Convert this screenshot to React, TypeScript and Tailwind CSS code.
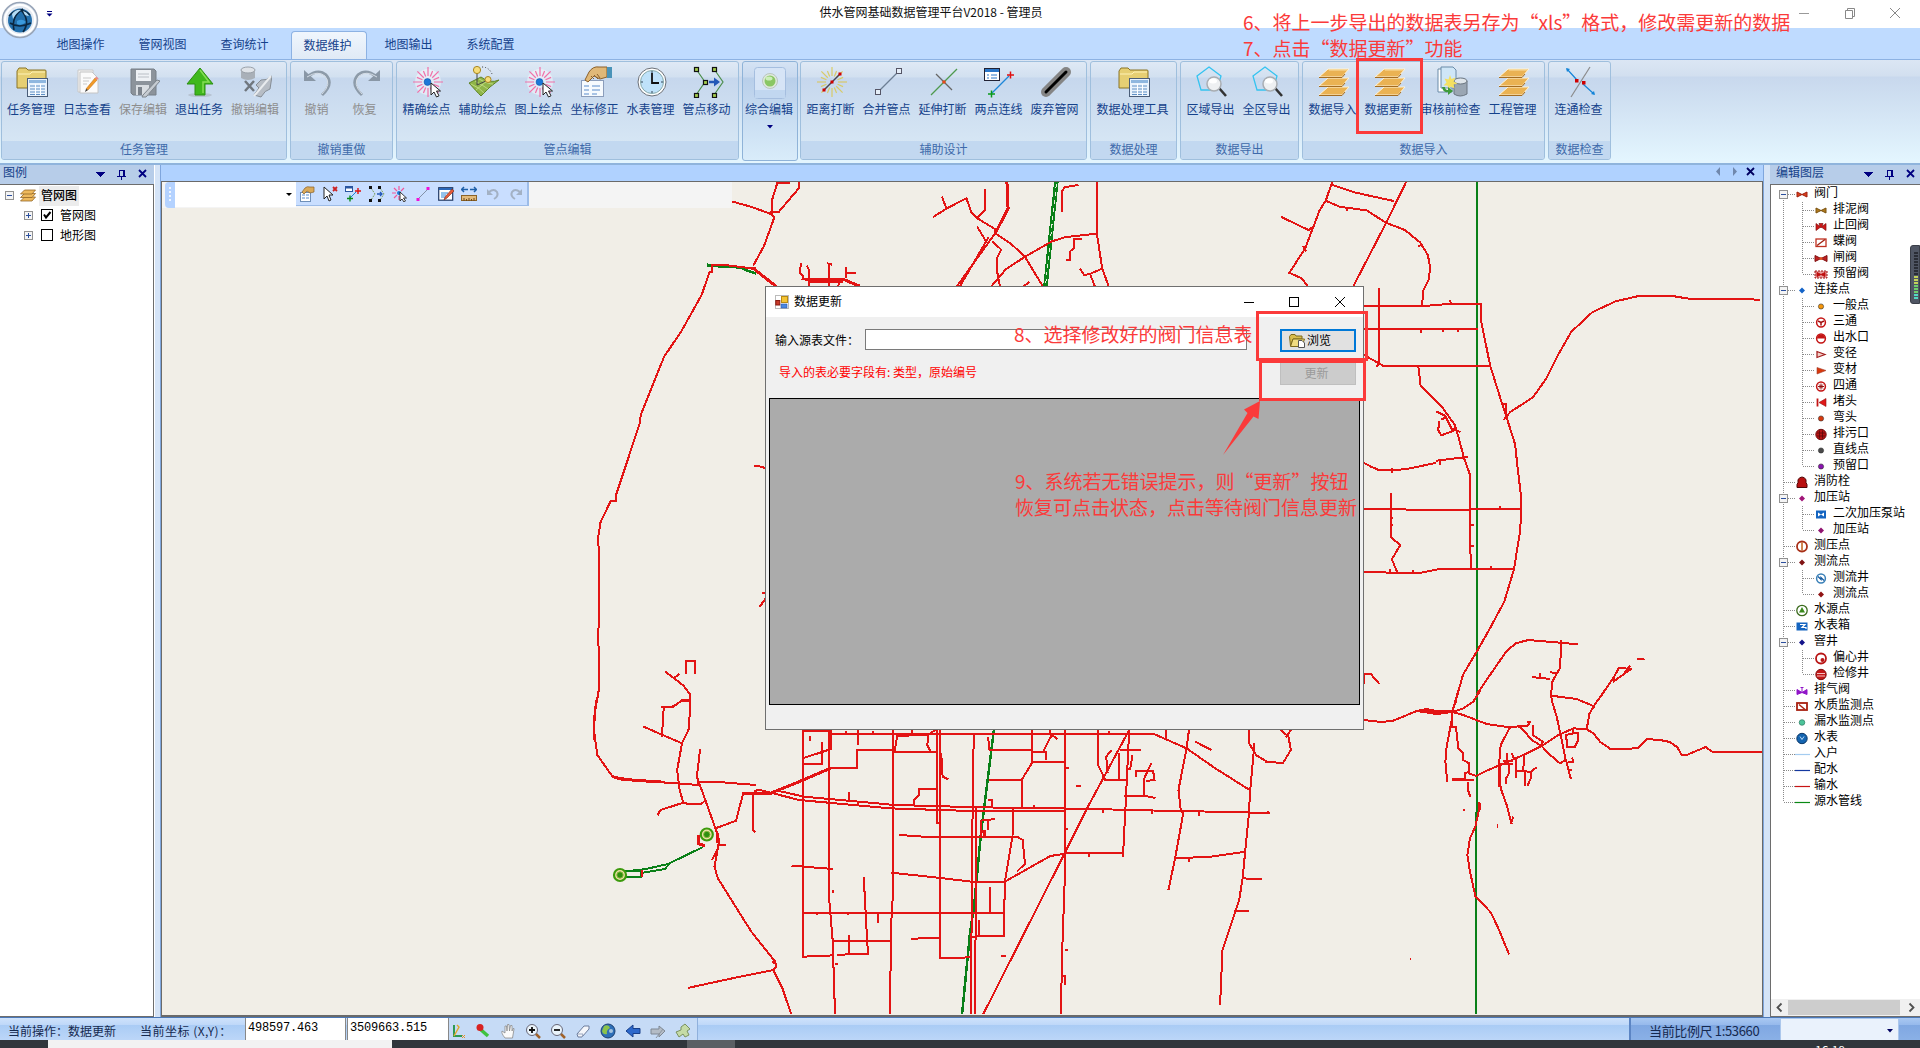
import React from "react";

type P = { children?: React.ReactNode };

const RED = "#e31414";
const GREEN = "#0a8018";

/* ---------- ribbon icons (32 x 32) ---------- */
const Svg32 = ({ children }: P) => (
  <svg width="32" height="32" viewBox="0 0 32 32" fill="none">
    {children}
  </svg>
);

const FolderTable = () => (
  <Svg32>
    <path d="M1 5 L3 2 H10 L12 4 H29 Q30 4 30 5 V22 H1 Z" fill="#e6cf73" stroke="#8a7526" />
    <path d="M2 8 H14 L16 6 H29" stroke="#fff3b8" />
    <rect x="11.5" y="12.5" width="20" height="18" fill="#e9f3fd" stroke="#4a5d78" />
    <rect x="13" y="14" width="17" height="3" fill="#8fb7df" />
    <path d="M14 20H29M14 23H29M14 26H29M14 28.500H29" stroke="#5f8fc4" />
    <path d="M19.500 18V29M24.500 18V29" stroke="#fff" />
  </Svg32>
);

const LogIcon = () => (
  <Svg32>
    <path d="M6 4H21V26H6Z" fill="#f4f4f4" stroke="#c9c9c9" />
    <path d="M8 6H20L26 12V27H8Z" fill="#fbfbfb" stroke="#c4c4c4" />
    <path d="M11 12H19M11 15H17M11 18H15" stroke="#c9c9c9" />
    <path d="M14 23 L23 12 L25 14 L16 24 Z" fill="#f39a26" stroke="#c2741a" strokeWidth=".6" />
    <path d="M14 23L13 26L16 24Z" fill="#333" />
    <path d="M23 12L24 10.500L26.500 12.500L25 14Z" fill="#e88" />
  </Svg32>
);

const SaveGray = () => (
  <Svg32>
    <path d="M3 3H26L28 5V29H5L3 27Z" fill="#8c939b" stroke="#777e87" />
    <rect x="8" y="4" width="15" height="11" fill="#eef1f5" />
    <path d="M10 8H21M10 11H21" stroke="#b9bec5" />
    <rect x="8" y="19" width="13" height="10" fill="#d9dde2" />
    <rect x="10" y="21" width="4" height="8" fill="#7b828b" />
    <path d="M15 29 L29 14 L32 15 L18 31 H14Z" fill="#c6cbd1" stroke="#7d848c" />
  </Svg32>
);

const UpArrow = () => (
  <Svg32>
    <ellipse cx="16" cy="29" rx="12" ry="2" fill="#b7c4d2" />
    <path d="M16 2 L29 18 H21 V29 H11 V18 H3 Z" fill="#3fb81c" stroke="#2c8f12" />
    <path d="M16 4 L25 16 H19 V27" stroke="#86dd55" strokeWidth="1.500" />
  </Svg32>
);

const CancelEdit = () => (
  <Svg32>
    <path d="M1 4V12Q8 16 15 12V4" fill="#a9b0b8" />
    <ellipse cx="8" cy="4" rx="7" ry="3" fill="#dfe3e8" stroke="#9aa1a9" />
    <path d="M5 15L14 25M14 15L5 25" stroke="#70777f" strokeWidth="2.500" />
    <path d="M16 19L21 14Q26 15 32 10L30 23Q25 24 21 31L14 29L19 22Z" fill="#b7bdc5" stroke="#858c94" />
    <path d="M31 10L14 30" stroke="#e8ebee" strokeWidth="2" />
  </Svg32>
);

const UndoBig = ({ flip = false }: { flip?: boolean }) => (
  <Svg32>
    <g transform={flip ? "translate(32 0) scale(-1 1)" : undefined}>
      <path d="M5 11 Q16 2 24 9 Q32 18 20 29" stroke="#8d9ba9" strokeWidth="3" />
      <path d="M2 4V15H14Z" fill="#8997a6" />
      <path d="M5 11 Q16 4 23 10 Q30 18 20 28" stroke="#d6dee7" strokeWidth="1" />
    </g>
  </Svg32>
);

const Burst = ({ color = "#f070a8", dot = true }: { color?: string; dot?: boolean }) => (
  <>
    {Array.from({ length: 16 }, (_, i) => {
      const a = (i * Math.PI) / 8;
      const r = i % 2 ? 12 : 15;
      return (
        <line
          key={i}
          x1={16 + 6 * Math.cos(a)}
          y1={16 + 6 * Math.sin(a)}
          x2={16 + r * Math.cos(a)}
          y2={16 + r * Math.sin(a)}
          stroke={color}
          strokeWidth="1.200"
        />
      );
    })}
    {dot && <circle cx="15.500" cy="16" r="3.400" fill="#1c78d8" stroke="#0c55a8" strokeWidth=".6" />}
  </>
);

const Pointer = ({ x = 19, y = 17 }: { x?: number; y?: number }) => (
  <path d={`M${x} ${y}v12l3-3 2.500 5 2.500-1.200-2.500-4.800h4z`} fill="#fff" stroke="#222" strokeWidth="1" />
);

const PointIcon = () => (
  <Svg32>
    <circle cx="16" cy="16" r="13" fill="#fff" opacity=".45" />
    <Burst />
    <Pointer />
  </Svg32>
);

const AssistIcon = () => (
  <Svg32>
    <path d="M1 17 L13 11 Q22 18 31 14 Q22 20 13 30 Q9 26 1 17Z" fill="#8fb548" stroke="#5f8428" />
    <path d="M3 18Q12 22 16 27M7 15Q16 20 20 23M11 13Q20 18 25 18M8 24L20 14" stroke="#c9e08e" strokeWidth=".8" />
    <path d="M9 5V19M9 19L20 14" stroke="#444" />
    <circle cx="9" cy="4" r="3.600" fill="#f6dd7b" stroke="#a88620" />
    <circle cx="20" cy="13.500" r="3" fill="#f6dd7b" stroke="#a88620" />
    <path d="M14 1Q21 1 24 8" stroke="#333" strokeDasharray="1 2" />
  </Svg32>
);

const HandForm = () => (
  <Svg32>
    <rect x="1.500" y="14.500" width="22" height="16" fill="#f6fafe" stroke="#8b9dbb" />
    <path d="M4 20H9M4 24H9M4 28H9M12 20H20M12 24H20M12 28H17" stroke="#5b8ccc" />
    <path d="M5 14 L9 6 Q13 0 19 1 H27 V11 L20 13 L14 10 L8 16 Z" fill="#e0b878" stroke="#8a5f2a" />
    <path d="M11 10L14 13M14 9L18 13M17 8L20 12" stroke="#8a5f2a" />
    <rect x="27" y="1" width="5" height="11" fill="#4a93b8" />
  </Svg32>
);

const ClockIcon = () => (
  <Svg32>
    <circle cx="16" cy="16" r="14" fill="#fff" stroke="#6b7078" />
    <circle cx="16" cy="16" r="11.500" fill="#bfe2fa" stroke="#8aa" />
    <path d="M16 7V17H23" stroke="#111" strokeWidth="1.800" />
    <path d="M16 5v2M16 25v2M5 16h2M25 16h2" stroke="#345" />
  </Svg32>
);

const MoveIcon = () => (
  <Svg32>
    <path d="M4 3L13 16L4 29M22 3L31 16L22 29" stroke="#4d8f4d" strokeWidth="1.200" />
    <path d="M17 16H26" stroke="#2459b8" strokeWidth="2.500" />
    <path d="M22 11.500L28 16L22 20.500Z" fill="#2459b8" />
    {[
      [2, 1],
      [20, 1],
      [11, 14],
      [2, 27],
      [20, 27],
    ].map(([x, y]) => (
      <rect key={`${x}-${y}`} x={x + 0.5} y={y + 0.5} width="4" height="4" fill="#a6cf4e" stroke="#111" strokeWidth="1.200" />
    ))}
  </Svg32>
);

const GreenDot = () => (
  <Svg32>
    <rect x=".5" y=".5" width="31" height="31" rx="3" fill="#d6e4f6" stroke="#a5bedf" />
    <rect x="1" y="23" width="30" height="8" fill="#c1d7f0" />
    <circle cx="16" cy="14" r="7.500" fill="#dfe9dc" stroke="#b9c6bd" />
    <circle cx="16" cy="14" r="5.500" fill="#8ac764" />
    <ellipse cx="15" cy="11.500" rx="3.500" ry="2" fill="#cdeebb" />
  </Svg32>
);

const BreakDistance = () => (
  <Svg32>
    <g opacity=".9">
      <Burst color="#d9c95a" dot={false} />
    </g>
    <path d="M8 24L24 8" stroke="#445" strokeWidth="1.500" />
    <rect x="22.500" y="6.500" width="3" height="3" fill="#d00000" />
    <rect x="14.500" y="14.500" width="3" height="3" fill="#d00000" />
    <rect x="6.500" y="22.500" width="3" height="3" fill="#d00000" />
  </Svg32>
);

const MergeIcon = () => (
  <Svg32>
    <path d="M7 25L25 7" stroke="#6d7f95" strokeWidth="1.300" />
    <rect x="24.500" y="2.500" width="5" height="5" fill="#e5eef8" stroke="#556" />
    <rect x="3.500" y="23.500" width="5" height="5" fill="#e5eef8" stroke="#556" />
  </Svg32>
);

const ExtendBreak = () => (
  <Svg32>
    <path d="M3 29L29 3" stroke="#4e9a4e" strokeWidth="1.300" />
    <path d="M8 8L24 24" stroke="#666" strokeWidth="1.200" />
    <circle cx="16" cy="16" r="1.800" fill="#e44a1a" />
  </Svg32>
);

const TwoPoint = () => (
  <Svg32>
    <rect x=".5" y="2.500" width="15" height="12" fill="#fff" stroke="#223" />
    <rect x="1" y="3" width="14" height="3" fill="#2a76c8" />
    <path d="M3 9h2M3 12h2M7 9h6M7 12h6" stroke="#2a76c8" />
    <path d="M8 27L25 10" stroke="#1d86d8" strokeWidth="1.300" />
    <path d="M4 28H11M7.500 24.500V31.500" stroke="#0a9a1a" strokeWidth="1.500" />
    <path d="M23 9H30M26.500 5.500V12.500" stroke="#e01010" strokeWidth="1.500" />
  </Svg32>
);

const Abandon = () => (
  <Svg32>
    <path d="M6 26L26 6" stroke="#858585" strokeWidth="10" strokeLinecap="round" />
    <path d="M6 26L26 6" stroke="#000" strokeWidth="3" strokeLinecap="round" />
  </Svg32>
);

const AreaExport = () => (
  <Svg32>
    <path d="M13 1L25 10L21 24H5L1 10Z" stroke="#35c3f0" strokeWidth="1.300" />
    <path d="M23 22L30 30" stroke="#333" strokeWidth="2.500" />
    <circle cx="18" cy="18" r="7" fill="#eef0f2" stroke="#a9adb2" strokeWidth="1.500" />
    <ellipse cx="17" cy="15" rx="4" ry="2.500" fill="#fff" />
  </Svg32>
);

const Layers = () => (
  <Svg32>
    {[20, 11, 2].map((y) => (
      <path key={y} d={`M10 ${y + 1}H31L24 ${y + 9}H1Z`} fill="#eab253" stroke="#fdf3dc" strokeWidth="1" />
    ))}
    {[29, 20, 11].map((y) => (
      <path key={y} d={`M1 ${y}.500H24L27 ${y - 3}`} stroke="#a36c22" strokeWidth="1" />
    ))}
    <path d="M11 4H29" stroke="#fbe0a3" />
  </Svg32>
);

const AuditIcon = () => (
  <Svg32>
    <path d="M2 3H13L16 6V26H2Z" fill="#fff" stroke="#6b8ba8" />
    <path d="M5 1H17L20 4V22H5Z" fill="#cfe6f7" stroke="#6b8ba8" />
    <path d="M18 15V28Q24 32 31 28V15" fill="#9aa6b3" stroke="#6a7580" />
    <ellipse cx="24.500" cy="15" rx="6.500" ry="3" fill="#dfe5ea" stroke="#6a7580" />
    <path d="M14 9l1.500 4 4-1.500-2 4 4 2-4 1 1 4-4-2-2 3-1-4-4 0 3-3-2-4 4 1z" fill="#f4e061" />
    <path d="M6 21Q7 27 12 26V29L17 25L12 21V24Q9 24 9 21Z" fill="#3f9b3a" />
  </Svg32>
);

const ConnCheck = () => (
  <Svg32>
    <path d="M26 1L7 31" stroke="#8b8b8b" strokeWidth="1.200" />
    <path d="M3 3L13 14M19 18L30 28" stroke="#1585d8" strokeWidth="1.200" />
    <path d="M2 2l4 1-3 3zM31 29l-4-1 3-3z" fill="#1585d8" />
    <rect x="11" y="13" width="3.500" height="3.500" fill="#d00000" />
    <rect x="18" y="15" width="3.500" height="3.500" fill="#d00000" />
  </Svg32>
);

/* ---------- ribbon ---------- */
type Item = { label: string; icon: React.ReactNode; w?: string; off?: boolean };

const RibbonGroup = ({ title, items, className }: { title: string; items: Item[]; className: string }) => (
  <div
    className={`flex h-[99px] shrink-0 flex-col overflow-hidden rounded-[3px] border border-[#9fbfdd] bg-[linear-gradient(180deg,#dfe9f5_0px,#d2e0f0_15px,#c6d7ed_16px,#d6e6f4_81px)] ${className}`}
  >
    <div className="flex h-[80px] justify-center pt-[4px]">
      {items.map((it) => (
        <div key={it.label} className={`flex shrink-0 flex-col items-center ${it.w ?? "w-[56px]"}`}>
          {it.icon}
          <span
            className={`mt-[2px] pr-[2px] text-[12px] leading-[18px] whitespace-nowrap ${it.off ? "text-[#8d8d8d]" : "text-[#15428b]"}`}
          >
            {it.label}
          </span>
        </div>
      ))}
    </div>
    <div className="h-[18px] bg-[#c2d8f0] text-center text-[12px] leading-[16px] text-[#3e6aaa]">{title}</div>
  </div>
);

const Ribbon = () => (
  <div className="flex h-[104px] shrink-0 border-t border-[#8db2e3] bg-[linear-gradient(180deg,#dbe6f4_0px,#d2dfef_16px,#c8d8ed_17px,#e3f5fe_100px)] pt-px">
    <RibbonGroup
      className="ml-px w-[286px]"
      title="任务管理"
      items={[
        { label: "任务管理", icon: <FolderTable /> },
        { label: "日志查看", icon: <LogIcon /> },
        { label: "保存编辑", icon: <SaveGray />, off: true },
        { label: "退出任务", icon: <UpArrow /> },
        { label: "撤销编辑", icon: <CancelEdit />, off: true },
      ]}
    />
    <RibbonGroup
      className="ml-[3px] w-[103px]"
      title="撤销重做"
      items={[
        { label: "撤销", icon: <UndoBig />, off: true, w: "w-[48px]" },
        { label: "恢复", icon: <UndoBig flip />, off: true, w: "w-[48px]" },
      ]}
    />
    <RibbonGroup
      className="ml-[3px] w-[343px]"
      title="管点编辑"
      items={[
        { label: "精确绘点", icon: <PointIcon /> },
        { label: "辅助绘点", icon: <AssistIcon /> },
        { label: "图上绘点", icon: <PointIcon /> },
        { label: "坐标修正", icon: <HandForm /> },
        { label: "水表管理", icon: <ClockIcon /> },
        { label: "管点移动", icon: <MoveIcon /> },
      ]}
    />
    <div className="ml-[3px] flex h-[100px] w-[56px] shrink-0 flex-col items-center rounded-[3px] border border-[#8fb3d8] bg-[linear-gradient(180deg,#d5e3f4_0px,#c8d9ef_15px,#b9cfea_16px,#d9ecfa_98px)] pt-[5px]">
      <GreenDot />
      <span className="mt-px pr-[2px] text-[12px] leading-[18px] whitespace-nowrap text-[#15428b]">综合编辑</span>
      <svg className="mt-[7px]" width="6" height="4" viewBox="0 0 6 4">
        <path d="M0 0H6L3 3.500Z" fill="#000080" />
      </svg>
    </div>
    <RibbonGroup
      className="ml-[2px] w-[287px]"
      title="辅助设计"
      items={[
        { label: "距离打断", icon: <BreakDistance /> },
        { label: "合并管点", icon: <MergeIcon /> },
        { label: "延伸打断", icon: <ExtendBreak /> },
        { label: "两点连线", icon: <TwoPoint /> },
        { label: "废弃管网", icon: <Abandon /> },
      ]}
    />
    <RibbonGroup
      className="ml-[3px] w-[87px]"
      title="数据处理"
      items={[{ label: "数据处理工具", icon: <FolderTable />, w: "w-[80px]" }]}
    />
    <RibbonGroup
      className="ml-[3px] w-[119px]"
      title="数据导出"
      items={[
        { label: "区域导出", icon: <AreaExport /> },
        { label: "全区导出", icon: <AreaExport /> },
      ]}
    />
    <RibbonGroup
      className="ml-[3px] w-[243px]"
      title="数据导入"
      items={[
        { label: "数据导入", icon: <Layers /> },
        { label: "数据更新", icon: <Layers /> },
        { label: "审核前检查", icon: <AuditIcon />, w: "w-[68px]" },
        { label: "工程管理", icon: <Layers /> },
      ]}
    />
    <RibbonGroup
      className="ml-[3px] w-[63px]"
      title="数据检查"
      items={[{ label: "连通检查", icon: <ConnCheck /> }]}
    />
  </div>
);

/* ---------- small 16 px icons ---------- */
const Svg16 = ({ children }: P) => (
  <svg width="16" height="16" viewBox="0 0 16 16" fill="none" className="shrink-0">
    {children}
  </svg>
);

const Undo16 = ({ flip = false }: { flip?: boolean }) => (
  <Svg16>
    <g transform={flip ? "translate(16 0) scale(-1 1)" : undefined}>
      <path d="M4 6Q9 2 12 6Q14 10 9 13" stroke="#a3b1c4" strokeWidth="2" />
      <path d="M2 3V9H8Z" fill="#a3b1c4" />
    </g>
  </Svg16>
);

const mapTools: React.ReactNode[] = [
  <Svg16 key="prop">
    <rect x="1.500" y="6.500" width="10" height="9" fill="#fff" stroke="#6f8fb8" />
    <path d="M3 9h3M3 12h3M7 9h3M7 12h3" stroke="#5b8ccc" />
    <path d="M3 6L6 2Q8 0 11 1H15V6L11 7L8 5L5 8Z" fill="#d9a95a" stroke="#8a6025" strokeWidth=".7" />
  </Svg16>,
  <Svg16 key="sel">
    <path d="M2 1v12l3-3 2 5 2-1-2-5h4z" fill="#fff" stroke="#222" />
    <path d="M11 1L15 5M15 1L11 5" stroke="#c22" strokeWidth="1.800" />
  </Svg16>,
  <Svg16 key="add">
    <rect x=".5" y=".5" width="7" height="5" fill="#fff" stroke="#2a56a0" />
    <path d="M1 1.500H7" stroke="#2a56a0" strokeWidth="2" />
    <path d="M5 12L11 6" stroke="#1d86d8" />
    <path d="M2 12.500H8M5 9.500V15.500" stroke="#0a8a1a" strokeWidth="1.400" />
    <path d="M10 5H16M13 2V8" stroke="#e01010" strokeWidth="1.400" />
  </Svg16>,
  <Svg16 key="mv">
    <path d="M2 2L6 8L2 14M11 2L15 8L11 14" stroke="#7ba05a" strokeDasharray="2 1" />
    <path d="M8 8H13M11 6L13 8L11 10" stroke="#2459b8" strokeWidth="1.300" />
    <path d="M0 0h3v3H0zM9 0h3v3h-3zM0 13h3v3H0zM9 13h3v3h-3z" fill="#111" />
  </Svg16>,
  <Svg16 key="pt">
    <path d="M7 0V4M0 7H4M2 2L5 5M12 2L9 5M2 12L5 9M7 10V14" stroke="#f0569a" strokeWidth="1.200" />
    <circle cx="7" cy="7" r="2" fill="#1c78d8" />
    <path d="M8 6v9l2-2 2 3 1.500-1-2-3h3z" fill="#fff" stroke="#222" strokeWidth=".9" />
  </Svg16>,
  <Svg16 key="ln">
    <path d="M3 13L13 3" stroke="#8391a8" />
    <path d="M1.500 12h3v3h-3zM11.500 1h3v3h-3z" fill="#f010d8" />
  </Svg16>,
  <Svg16 key="ed">
    <rect x=".7" y="1.700" width="14" height="12.500" fill="#fff" stroke="#223a66" strokeWidth="1.200" />
    <path d="M1 3H14" stroke="#2a66b8" strokeWidth="2" />
    <path d="M3 7h7M3 9h5M3 11h4" stroke="#2a86d8" />
    <path d="M14 3L7 11L6 14L9 12L16 5Z" fill="#e55a3a" stroke="#7a2a18" strokeWidth=".6" />
  </Svg16>,
  <Svg16 key="rl">
    <path d="M1 3.500H7M9 3.500H15M3 1L.5 3.500L3 6M13 1L15.500 3.500L13 6" stroke="#1f5fa8" strokeWidth="1.500" />
    <rect x=".5" y="9.500" width="15" height="5" fill="#e2b97a" stroke="#8a6228" />
    <path d="M3 12v3M5.500 13v2M8 12v3M10.500 13v2M13 12v3" stroke="#6d4818" />
  </Svg16>,
  <Undo16 key="u" />,
  <Undo16 key="r" flip />,
];

const statusTools: React.ReactNode[] = [
  <Svg16 key="a">
    <path d="M4 2V13H12" stroke="#2f9a56" strokeWidth="2" />
    <path d="M4 13L9 4L7 2" stroke="#e0a92a" strokeWidth="1.400" />
    <path d="M12 12l3 3M15 12l-3 3" stroke="#e0922a" />
  </Svg16>,
  <Svg16 key="b">
    <path d="M5 6L13 13" stroke="#3fc23f" strokeWidth="3.500" />
    <circle cx="5" cy="4.500" r="3.500" fill="#d82222" />
  </Svg16>,
  <Svg16 key="c">
    <path d="M5 15Q1 10 2 8L5 10V3L6.500 3L7 8L7.500 1.500H9L9.500 8L10.500 2.500H12L12 8L13.500 5L14 6L12.500 15Z" fill="#fafafa" stroke="#8a8a8a" strokeWidth=".8" />
  </Svg16>,
  <Svg16 key="d">
    <path d="M10 10L15 15" stroke="#a0622a" strokeWidth="2.500" />
    <circle cx="7" cy="7" r="5.500" fill="#eaf4fb" stroke="#667" />
    <path d="M4 7H10M7 4V10" stroke="#111" strokeWidth="1.800" />
  </Svg16>,
  <Svg16 key="e">
    <path d="M10 10L15 15" stroke="#a0622a" strokeWidth="2.500" />
    <circle cx="7" cy="7" r="5.500" fill="#eaf4fb" stroke="#667" />
    <path d="M4 7H10" stroke="#111" strokeWidth="1.800" />
  </Svg16>,
  <Svg16 key="f">
    <path d="M2 11L9 3H14L14 6L7 14H3Z" fill="#f4f6fa" stroke="#6c7c9c" />
    <path d="M7 14L8 11H3" stroke="#9aa6bf" />
  </Svg16>,
  <Svg16 key="g">
    <circle cx="8" cy="8" r="7" fill="#2e6fb8" stroke="#1b3f70" />
    <path d="M4 3Q9 1 10 5Q6 7 7 11Q3 12 2 8Z" fill="#8bc34a" />
    <circle cx="11" cy="8" r="2" fill="#d8e8f0" opacity=".7" />
  </Svg16>,
  <Svg16 key="h">
    <path d="M1 8L8 2V5.500H15V10.500H8V14Z" fill="#2c68cc" stroke="#173f8a" />
  </Svg16>,
  <Svg16 key="i">
    <path d="M15 8L9 3V6H1V11H9V14Z" fill="#b4bcc6" stroke="#7e8894" />
    <path d="M6 15L13 6" stroke="#8b949e" />
  </Svg16>,
  <Svg16 key="j">
    <path d="M6 4L10 1L15 6L12 8L14 12L10 14L8 11L4 14L1 9L6 7Z" fill="#c5dba6" stroke="#7a9160" />
  </Svg16>,
];

/* ---------- dock panel header ---------- */
const PanelHead = ({ title, className }: { title: string; className?: string }) => (
  <div className={`flex h-[19px] shrink-0 items-center bg-[#b7cde9] text-[12px] text-[#15428b] ${className ?? ""}`}>
    <span className="grow pb-[5px] leading-[14px]">{title}</span>
    <svg width="60" height="14" viewBox="0 0 60 14" fill="none" shapeRendering="crispEdges" className="-mt-[2px]">
      <path d="M3 5H12L7.500 10Z" fill="#000080" />
      <path d="M26 3V9M30 3V9M31 3V9M26 3H31M24 9.500H33M28.500 9V13" stroke="#000080" />
      <path d="M46 3L53 10M53 3L46 10" stroke="#000080" strokeWidth="1.800" shapeRendering="auto" />
    </svg>
  </div>
);

/* ---------- left legend ---------- */
const Expander = ({ plus = false }: { plus?: boolean }) => (
  <svg width="9" height="9" viewBox="0 0 9 9" shapeRendering="crispEdges" className="shrink-0">
    <rect x=".5" y=".5" width="8" height="8" fill="#f4f4f4" stroke="#919191" />
    <path d={plus ? "M2 4.500H7M4.500 2V7" : "M2 4.500H7"} stroke="#2b4f9e" />
  </svg>
);

const Check = ({ on = false }: { on?: boolean }) => (
  <svg width="12" height="12" viewBox="0 0 12 12" className="shrink-0">
    <rect x=".5" y=".5" width="11" height="11" fill="#fff" stroke="#000" />
    {on && <path d="M3 5.500L5 8.500L9.500 3" stroke="#000" strokeWidth="2" fill="none" />}
  </svg>
);

const LeftPanel = () => (
  <div className="flex w-[154px] shrink-0 flex-col">
    <PanelHead title="图例" className="pr-px pl-[3px]" />
    <div className="flex grow flex-col border-t border-r border-b border-[#6d6d6d] bg-white text-[12px] text-black">
      <div className="flex h-[21px] items-center pl-[5px]">
        <Expander />
        <svg className="ml-[6px] shrink-0" width="16" height="13" viewBox="0 0 32 26">
          {[16, 9, 2].map((y) => (
            <path key={y} d={`M9 ${y}H31L24 ${y + 8}H1Z`} fill="#eeb95c" stroke="#8f6222" strokeWidth="1.500" />
          ))}
        </svg>
        <span className="ml-[3px] bg-[#ececec] px-[2px] pb-[3px] leading-[17px] font-medium">管网图</span>
      </div>
      <div className="-mt-px flex h-5 items-center pl-6">
        <Expander plus />
        <span className="ml-2 flex">
          <Check on />
        </span>
        <span className="ml-[7px] pb-px leading-[19px]">管网图</span>
      </div>
      <div className="flex h-5 items-center pl-6">
        <Expander plus />
        <span className="ml-2 flex">
          <Check />
        </span>
        <span className="ml-[7px] pb-px leading-[19px]">地形图</span>
      </div>
    </div>
  </div>
);

/* ---------- right layer tree ---------- */
const bow = (c: string, s: string) => <path d="M-5 -2.500L0 0L5 -2.500V2.500L0 0L-5 2.500Z" fill={c} stroke={s} strokeWidth="1" />;
const dot = (c: string, r = 2.600) => <circle r={r} fill={c} stroke="#333" strokeWidth=".6" />;
const dia = (c: string) => <path d="M-3 0L0 -3L3 0L0 3Z" fill={c} />;
const ring = (inner: React.ReactNode, c = "#c41414") => (
  <>
    <circle r="4.400" fill="#fff" stroke={c} strokeWidth="1.500" />
    {inner}
  </>
);
const line = (c: string) => <path d="M-7 0H8" stroke={c} strokeWidth="1.200" />;

type Row = { t: string; i: React.ReactNode; d?: 1; open?: 1; last?: 1 };

const rows: Row[] = [
  { t: "阀门", i: bow("#d8401c", "#a02010"), open: 1 },
  { t: "排泥阀", i: bow("#b07a1c", "#7a5210"), d: 1 },
  { t: "止回阀", i: <path d="M-5 -3L-1 0L-2 -3H2L1 0L5 -3V4L1 1H-1L-5 4Z" fill="#d01818" stroke="#801010" strokeWidth=".7" />, d: 1 },
  { t: "蝶阀", i: <><rect x="-5" y="-3.500" width="10" height="7.500" fill="#fff" stroke="#c03020" strokeWidth="1.300" /><path d="M-4 3L4 -3" stroke="#a02010" strokeWidth="1.300" /></>, d: 1 },
  { t: "闸阀", i: <><path d="M-6 -3L0 0L6 -3V3L0 0L-6 3Z" fill="#c02020" stroke="#801010" /><circle r="1.500" fill="#e05020" /></>, d: 1 },
  { t: "预留阀", i: <><rect x="-6" y="-3.500" width="12" height="7" fill="#e8a0a0" stroke="#a01010" strokeDasharray="2 1" /><path d="M-4 -2L0 0L4 -2V2L0 0L-4 2Z" fill="#c01010" stroke="#c01010" /></>, d: 1, last: 1 },
  { t: "连接点", i: dia("#1464c8"), open: 1 },
  { t: "一般点", i: dot("#f5960a"), d: 1 },
  { t: "三通", i: ring(<path d="M-3 -1.500L0 0L3 -1.500M0 0V3" stroke="#a01010" strokeWidth="1.500" />), d: 1 },
  { t: "出水口", i: ring(<path d="M-4 0A4 4 0 0 1 4 0Z" fill="#c41414" />), d: 1 },
  { t: "变径", i: <path d="M-4 -3V3L4 0Z" fill="#f4d0c8" stroke="#a01818" strokeWidth="1.200" />, d: 1 },
  { t: "变材", i: <path d="M-4 -3V3.500L5 0Z" fill="#d8380c" stroke="#a04030" strokeWidth=".6" />, d: 1 },
  { t: "四通", i: ring(<path d="M-3 0H3M0 -3V3M-2 -2L2 2M2 -2L-2 2" stroke="#901010" />), d: 1 },
  { t: "堵头", i: <><path d="M-3.500 -4V4" stroke="#c41414" strokeWidth="1.800" /><path d="M-2 0L5 -4V4Z" fill="#e01818" stroke="#901010" strokeWidth=".6" /></>, d: 1 },
  { t: "弯头", i: dot("#d8380c"), d: 1 },
  { t: "排污口", i: <><circle r="5.200" fill="#b81414" stroke="#701010" /><path d="M-4 -1.500H4M-4 1.500H4M-1.500 -4V4M1.500 -4V4" stroke="#5c0808" strokeWidth=".8" /></>, d: 1 },
  { t: "直线点", i: dot("#4a4a4a"), d: 1 },
  { t: "预留口", i: dot("#8a14b0"), d: 1, last: 1 },
  { t: "消防栓", i: <path d="M-5 5V2L-4 0V-3Q0 -8 4 -3V0L5 2V5Z" fill="#b81010" stroke="#500606" /> },
  { t: "加压站", i: dia("#a01478"), open: 1 },
  { t: "二次加压泵站", i: <><rect x="-5" y="-4" width="10" height="8" fill="#1464c0" /><path d="M-3 -2L0 0L3 -2V2L0 0L-3 2Z" fill="#fff" /></>, d: 1 },
  { t: "加压站", i: dia("#901470"), d: 1, last: 1 },
  { t: "测压点", i: <><circle r="5" fill="#fff" stroke="#a83018" strokeWidth="1.800" /><path d="M0 -4V4" stroke="#c06018" strokeWidth="1.500" /></> },
  { t: "测流点", i: dia("#801414"), open: 1 },
  { t: "测流井", i: ring(<path d="M-3 -2L0 1L0 -1L3 2" stroke="#145aa0" strokeWidth="1.300" />, "#3a80b8"), d: 1 },
  { t: "测流点", i: dia("#901414"), d: 1, last: 1 },
  { t: "水源点", i: <><circle r="5.200" fill="#fff" stroke="#3a6a1c" strokeWidth="1.300" /><path d="M0 -3.500L3 2H-3Z" fill="#3a8a1c" /></> },
  { t: "水表箱", i: <><rect x="-5.500" y="-4" width="11" height="8" fill="#1464c0" /><path d="M-2 -2H3L0 1H4V2.500" stroke="#fff" strokeWidth="1.200" fill="none" /></> },
  { t: "窨井", i: dia("#14148a"), open: 1 },
  { t: "偏心井", i: <><circle r="5" fill="#fff" stroke="#b81414" strokeWidth="1.800" /><circle cx="1.500" cy="1.500" r="2" fill="#b81414" /></>, d: 1 },
  { t: "检修井", i: <><circle r="5.200" fill="#c41818" stroke="#801010" /><path d="M-4 -1H4M-4 1.500H4" stroke="#f4c0c0" /></>, d: 1, last: 1 },
  { t: "排气阀", i: <path d="M-5 -1L0 2L5 -1V4L0 2L-5 4ZM0 2V-3M-1.500 -3H1.500" fill="#9014c8" stroke="#9014c8" /> },
  { t: "水质监测点", i: <><rect x="-5" y="-3.500" width="10" height="7" fill="#fff" stroke="#a82010" strokeWidth="1.800" /><path d="M-3 -2L3 3" stroke="#a82010" strokeWidth="1.500" /></> },
  { t: "漏水监测点", i: <circle r="2.800" fill="#4cc49a" stroke="#2a7a60" strokeWidth=".7" /> },
  { t: "水表", i: <><circle r="5.200" fill="#1464b0" stroke="#0c3868" /><path d="M-2 -2L0 1L2 -2" stroke="#bcdcf8" /></> },
  { t: "入户", i: line("#a4ccf0") },
  { t: "配水", i: line("#1438a0") },
  { t: "输水", i: line("#c81414") },
  { t: "源水管线", i: line("#0a8a14") },
];

const TreeRow = ({ r, first, end }: { r: Row; first: boolean; end: boolean }) => (
  <div className="flex h-4 items-center">
    <svg width={r.d ? 62 : 43} height="16" viewBox={`0 0 ${r.d ? 62 : 43} 16`} fill="none" className="shrink-0">
      <g stroke="#8a8a8a" strokeDasharray="1 1" shapeRendering="crispEdges">
        <path d={first ? "M12.500 8V16" : end ? "M12.500 0V8" : "M12.500 0V16"} />
        {!r.d && <path d="M13 8.500H24" />}
        {r.d && <path d={r.last ? "M31.500 0V8" : "M31.500 0V16"} />}
        {r.d && <path d="M32 8.500H43" />}
      </g>
      {r.open && (
        <g shapeRendering="crispEdges">
          <rect x="8.500" y="4.500" width="8" height="8" fill="#f4f4f4" stroke="#919191" />
          <path d="M10 8.500H15" stroke="#2b4f9e" />
        </g>
      )}
      <g transform={`translate(${r.d ? 50 : 31} 8.500)`}>{r.i}</g>
    </svg>
    <span className="-mt-[5px] text-[12px] leading-4 whitespace-nowrap text-black">{r.t}</span>
  </div>
);

const RightPanel = () => (
  <div className="flex w-[150px] shrink-0 flex-col">
    <PanelHead title="编辑图层" className="-mr-px pl-[6px]" />
    <div className="flex grow flex-col border-t border-b border-l border-[#6d6d6d] bg-white">
      <div className="flex grow flex-col pt-px">
        {rows.map((r, i) => (
          <TreeRow key={i} r={r} first={i === 0} end={i === rows.length - 1} />
        ))}
      </div>
      <div className="flex h-[17px] items-center bg-[#f0f0f0]">
        <svg width="17" height="17" viewBox="0 0 17 17" fill="none">
          <path d="M10.500 4.500L6.500 8.500L10.500 12.500" stroke="#505050" strokeWidth="1.800" />
        </svg>
        <div className="h-[15px] w-[112px] bg-[#cdcdcd]" />
        <svg className="ml-[3px]" width="17" height="17" viewBox="0 0 17 17" fill="none">
          <path d="M6.500 4.500L10.500 8.500L6.500 12.500" stroke="#505050" strokeWidth="1.800" />
        </svg>
      </div>
    </div>
  </div>
);

/* ---------- pipe network, drawn in four map sheets ---------- */
type Sheet = { tf: string; red: string; bold?: string };

const sheets: Sheet[] = [
  {
    tf: "translate(560 180) scale(.382653 .357143)",
    red: "M449 60L500 75L553 96L553 60L568 8H600M625 6V22L572 89L548 90M553 96L560 105L533 185L505 240M505 248L430 238H397V258H391L370 322L318 422L272 495L211 658L209 680L147 880V898L132 900L106 958L99 1005L101 1030V1250L99 1280L101 1310V1430L90 1500V1568M630 233L626 260L636 268L634 276H650M645 240L650 250V298M702 233V298M698 233L711 237M747 243V275M747 260H773M730 285L727 298M650 285H740M508 800L520 801L537 807M527 1157H537M522 1195L537 1172M975 104L1010 80L1062 51L1075 90L1090 107L1110 85V25M998 46L1010 80M1090 107L1138 138V150L1180 180L1215 215L1262 298M1120 160L1045 298M1138 148L1037 298M1090 130L1115 175M1130 172L1153 195L1141 220L1143 260L1150 298M1127 298L1165 250L1215 215L1285 172L1320 160L1405 150M1403 6V150L1417 248L1434 298M1355 14L1320 20L1312 30V90M1365 164H1343V190L1333 200V225H1322M1358 248L1370 266L1385 263L1417 248M1385 263L1398 298M1212 298L1226 285M275 1377L298 1395L312 1382M298 1395L322 1415L340 1440L339 1456M329 1382V1346H352V1382M340 1456H320L296 1475H265",
    bold: "M508 250L565 298M640 278H740L783 297M1168 6L1171 80L1138 148M500 248H512",
  },
  {
    tf: "translate(1160 180) scale(.382653 .357143)",
    red: "M450 6L433 58L417 85L380 190L338 260L370 275L386 298M374 185L382 200M445 12L510 35L560 47L612 59M643 6L591 120L505 298M433 58L470 75L540 85L591 120L640 140L680 175L700 210L706 245L702 280L688 310L685 350M488 78V88M675 186L685 180M316 103L388 140L402 130M533 352H700L765 346H838L840 400L863 520L895 630L905 662L928 740L934 800L944 890V940L940 990L925 1090L900 1180L860 1260L828 1320L792 1385L775 1450L771 1470M757 337L762 348M572 302V518M533 416H832M682 416V427M740 416V425M778 416V425M533 490L583 520H863M565 523L572 515M675 520L681 575L740 640L770 685L780 720L795 780L810 825V920L812 1088M730 675L727 700L735 715L765 703L748 665L735 670M722 648L745 660L762 695L785 706M533 792L550 802L572 812H620L650 808L722 792M722 786L806 775M606 805V820M733 785V797M533 920H640L645 924H810V920H944M888 912V920M603 877V1000L628 1022L606 1062L622 1104M603 945H608M603 966H608M812 966H820M812 1025H820M533 1097H580L600 1101L680 1100L735 1088H925M600 1090V1101M660 1092V1100M864 1082V1088M1568 336L1520 332H1380L1340 325H1250L1190 340L1130 370L1075 425L1040 490L1010 555L975 608L915 650L898 672M895 626H905V662M533 1412V1382H550L574 1412M828 1440L850 1405L905 1320L930 1297L963 1288L1093 1300M1048 1288L1046 1365L1025 1405L1023 1430M973 1392L1020 1397M993 1380V1394M1020 1378L1035 1382M1150 1450L1187 1390L1200 1365L1230 1370L1187 1403V1390M1215 1378L1228 1360M1246 1342L1266 1340",
  },
  {
    tf: "translate(560 700) scale(.478316 .333333)",
    red: "M75 0L71 90L78 165L110 230L160 242L245 250L288 255M290 246L340 247L410 255M272 0L270 85L255 130L245 210L250 270L258 308L268 312H295L305 300M258 308L210 330L204 346M293 148L286 230L295 265L325 385L333 420L330 445L323 500L330 535L400 695L450 785L452 800L446 810L465 865L484 945M333 434H347M330 445L318 480M446 810L360 835L267 864M215 20H235L255 2H272M217 20L213 110M173 79L255 130M325 385L368 362L383 280H440M565 205L620 204V151L700 149L705 108L770 104L785 90M455 272L510 290L700 315L880 322L1130 327L1180 330L1300 333L1485 339M440 278L500 300L690 325L880 334H1055M403 280V390L408 396M405 275L415 269L440 278M509 90V770L572 766M563 90V600L570 720L575 945M509 92H565M507 175L567 147V90M507 175V210M548 125V192H509M567 101H1240L1310 145L1370 205L1443 271M697 90V560L692 680L690 945M624 90V135M697 157H788M788 90V370H794M795 90V775L857 772M770 105L768 135L775 155M740 315V300L750 285V268H788M797 160L800 230L812 238M865 100L862 400L859 945M870 325L868 945M895 110L898 150H985M987 90V186H1055M897 240H965L988 186M965 240V322M987 157H1017V180M1010 155L1028 105L1040 117M895 300H903V318M1055 90V550L1050 750L1047 945M1190 90L1100 330L1055 460L884 945M1125 90V195L1140 240H1187M1190 90L1183 300L1177 470M1177 459H1065L1025 468L930 545H860L790 533L692 518M1170 150H1215M1168 160V240M1153 150L1142 170L1145 220M1197 165L1192 207H1185M1236 190L1220 240V285M1205 230V213H1240L1243 240L1225 243M1180 287H1220L1245 294M1315 90L1310 145L1293 270L1298 333L1303 340L1286 475L1272 570M1452 130L1443 271L1440 345L1427 535L1420 600L1385 750L1380 915M1441 90V130L1455 165L1480 187L1512 188L1528 150L1523 110L1507 90M1528 90L1517 112M1286 475L1360 470L1430 456M1427 535L1467 538M1410 632H1440M1328 125L1362 150M1267 90V120M709 405L760 410H955L968 420L970 470L973 490L955 515M948 322L946 410L930 545L928 707L862 710M880 410V362L910 357M895 360V390M875 710V660M898 562V638M509 638H928M484 497L570 507M635 530L642 720L644 762H605L580 766M570 722H692M604 705V762M733 716L797 714M605 277V303M622 303V318M922 768H932M1055 825V855M1055 204H1065M1055 386H1063M1135 328V340M1237 333V343M1335 335V347M1078 258H1090M1315 477V486M1107 459V470M990 315V322M1055 750H1062M570 580V570M575 792H582M665 640V668M602 638V645M537 638V645M523 108V122M598 93V100M735 90V100M1025 90V100M1148 92V100M655 92V100M1475 180V190",
    bold: "M110 230L130 238L210 246M383 280H440L500 245L565 205M880 395H888V408M290 405V432L303 437M1478 339H1482M330 400V430M444 782L450 790M1050 825V830M290 246V258",
  },
  {
    tf: "translate(1290 690) scale(.333333 .333333)",
    red: "M221 90L275 96L310 92L380 63L410 57L455 66H487L520 75L590 102L660 112L685 109H712L720 96H712M380 63L440 72L487 66M487 66L520 55L550 35L570 3M505 0L487 66L484 112H498L505 175L520 190V210L537 220V250L558 258L590 242L650 217L700 195L755 168L800 138L850 115L890 118L910 130L930 155L960 176H1020L1045 174L1070 147L1110 150L1140 156L1162 172L1175 195H1190L1247 171L1268 186H1420M484 95L470 170L466 215L472 277M537 245L525 250V268M487 269H551M534 275V300L541 320M568 337L567 360L556 410L540 445L532 495L540 545L556 618L603 668L625 715L657 793M660 112L632 165L627 225L628 275L634 300L650 345L665 402M670 380L665 395M651 190V215M666 190L673 210M640 212H668M640 221H668M657 222V250L648 265V283M678 205V265M702 195L700 240M680 243L722 245L740 232M705 245V287M724 245L722 265L713 287M685 109L700 120L725 150L755 168L775 190L810 220L830 208M728 105V135L758 155L755 170M783 0L785 30L800 80L812 135L825 200L843 268M835 215H852M845 203L851 213M837 240H845M890 118L898 72L912 47L943 3M783 17L860 27L915 50M850 115V130L828 135L832 170H855L865 150V128H848M520 360H524M621 404H624M621 412H624M360 808H363",
    bold: "M484 95V112M487 269H525M568 340V360M629 220V290M400 60L450 66L490 66",
  },
];

const Well = ({ x, y }: { x: number; y: number }) => (
  <g shapeRendering="auto">
    <circle cx={x} cy={y} r="6" fill="#efe0a8" stroke="#3c9a0c" strokeWidth="2.200" />
    <circle cx={x} cy={y} r="3.200" fill="#2f8f10" stroke="#8ab83c" strokeWidth="1" />
  </g>
);

const MapCanvas = () => (
  <svg width="1600" height="832" viewBox="162 182 1600 832" fill="none" shapeRendering="crispEdges" className="block">
    <path d="M1477 182V813H1476V1014" stroke={GREEN} strokeWidth="2" />
    <path d="M1056.300 182L1045.500 286" stroke={GREEN} strokeWidth="4.500" />
    <path d="M1056.300 184L1045.500 286" stroke="#e8f0e0" strokeWidth="1" strokeDasharray="4 4" />
    <path d="M994 729L981 833L974 907L970 933L962 1015" stroke={GREEN} strokeWidth="2.500" />
    <path d="M708.500 267V265L713 266L740 267.500L751 272L756 273.500" stroke={GREEN} strokeWidth="2.500" />
    <path d="M620 872L646 869L668 864L703 847M624 871H641V877H622M641 873L665 869L669 864" stroke={GREEN} strokeWidth="2" />
    {sheets.map((s) => (
      <g key={s.tf} transform={s.tf} stroke={RED}>
        <path d={s.red} strokeWidth="2" vectorEffect="non-scaling-stroke" />
        {s.bold && <path d={s.bold} strokeWidth="3" vectorEffect="non-scaling-stroke" />}
      </g>
    ))}
    <path d="M642 870V877" stroke={RED} strokeWidth="2" />
    <Well x={706.800} y={834.500} />
    <Well x={620} y={875} />
  </svg>
);

const MapToolbar = () => (
  <div className="absolute top-0 left-0 flex h-[26px] w-[570px] bg-[#f4f4f4]">
    <div className="ml-[3px] flex w-[10px] flex-col items-center gap-[2px] rounded-l bg-[#b4d2ff] pt-[5px]">
      {[0, 1, 2, 3].map((i) => (
        <i key={i} className="size-[2px] bg-[#eef5ff]" />
      ))}
    </div>
    <div className="flex h-[25px] w-[121px] items-center justify-end bg-white pr-[4px]">
      <svg width="6" height="4" viewBox="0 0 6 4">
        <path d="M0 0H6L3 3Z" fill="#000" />
      </svg>
    </div>
    <div className="flex h-[24px] w-[233px] items-center gap-[7.200px] border-r-2 border-b border-[#9dbce8] bg-[#c9deff] pl-[3px]">{mapTools}</div>
  </div>
);

const DocArea = () => (
  <div className="flex min-w-0 grow flex-col border-r border-l border-[#7fa6dd] bg-[#b0d2ff]">
    <div className="flex h-[16px] items-center justify-end pr-[5px]">
      <svg width="50" height="12" viewBox="0 0 50 12" fill="none" className="-mt-[2px]">
        <path d="M12 1V10L8 5.500ZM25 1V10L29 5.500Z" fill="#7088ad" />
        <path d="M39 2L46 9M46 2L39 9" stroke="#000060" strokeWidth="1.800" />
      </svg>
    </div>
    <div className="relative grow overflow-hidden border border-b-2 border-[#6a6a6a] bg-[#f1eee7]">
      <MapCanvas />
      <MapToolbar />
    </div>
  </div>
);

/* ---------- dialog ---------- */
const Dialog = () => (
  <div className="absolute top-[286px] left-[765px] flex h-[444px] w-[599px] flex-col border border-[#6f6f6f] bg-[#f0f0f0] text-[12px] text-black">
    <div className="flex h-[30px] items-center bg-white pl-[9px]">
      <svg width="14" height="14" viewBox="0 0 14 14">
        <rect x=".5" y=".5" width="13" height="13" fill="#fff" stroke="#bbb" />
        <rect x="6.500" y="1.500" width="6" height="6" fill="#f4c434" stroke="#b88a14" />
        <rect x=".8" y="5.500" width="4" height="4.500" fill="#c83a2a" stroke="#8a1a10" />
        <rect x="6" y="9" width="6" height="4" fill="#4a86e0" stroke="#2858a8" strokeWidth=".6" />
      </svg>
      <span className="ml-[5px] grow pb-[2px]">数据更新</span>
      <svg width="110" height="14" viewBox="0 0 110 14" fill="none" className="-mt-px mr-[12px]">
        <path d="M3 7.500H13" stroke="#000" />
        <rect x="48.500" y="2.500" width="9" height="9" stroke="#000" />
        <path d="M94 2L104 12M104 2L94 12" stroke="#000" />
      </svg>
    </div>
    <div className="mt-[12px] flex h-[23px] items-start">
      <span className="ml-[9px] w-[90px] leading-[22px]">输入源表文件：</span>
      <div className="h-[21px] w-[382px] border border-[#7a7a7a] bg-white" />
      <div className="ml-[33px] flex h-[23px] w-[76px] items-center border-2 border-[#0078d7] bg-[#e1e1e1] pl-[7px]">
        <svg width="17" height="14" viewBox="0 0 17 14">
          <path d="M.5 2.500L2 .5H6L7 2H13V5H4L1.500 12Z" fill="#d8bc4c" stroke="#7d6a1c" />
          <path d="M4 5H15.500L13 12.500H1.500Z" fill="#f0dc80" stroke="#7d6a1c" />
          <path d="M9.500 6.500H13L15.500 9V13.500H9.500Z" fill="#fff" stroke="#555" />
        </svg>
        <span className="ml-px pb-px leading-4">浏览</span>
      </div>
    </div>
    <div className="mt-[10px] flex h-[23px]">
      <span className="w-[500px] pl-[13px] leading-[20px] text-[#f00]">
        导入的表必要字段有
        <span className="inline-block w-[6px]">:</span>
        类型，原始编号
      </span>
      <div className="ml-[14px] h-[23px] w-[76px] border border-[#bfbfbf] bg-[#ccc] pr-[3px] text-center leading-[20px] text-[#9a9a9a]">更新</div>
    </div>
    <div className="mt-[13px] ml-[3px] h-[307px] w-[591px] border border-black bg-[#ababab]" />
  </div>
);

/* ---------- callouts over the window ---------- */
const noteText = "absolute text-[19px] leading-[26px] whitespace-nowrap text-[#fb3a3a]";

const Notes = () => (
  <>
    <div className={`${noteText} top-[9px] left-[1243px]`}>
      6、将上一步导出的数据表另存为“xls”格式，修改需更新的数据
      <br />
      7、点击“数据更新”功能
    </div>
    <div className="absolute top-[58px] left-[1356px] h-[76px] w-[67px] border-[3px] border-[#fb3a3a]" />
    <div className={`${noteText} top-[321px] left-[1014px]`}>8、选择修改好的阀门信息表</div>
    <div className={`${noteText} top-[468px] left-[1015px]`}>
      9、系统若无错误提示，则“更新”按钮
      <br />
      恢复可点击状态，点击等待阀门信息更新
    </div>
    <div className="absolute top-[311px] left-[1256px] h-[50px] w-[112px] border-[3px] border-[#fb3a3a]" />
    <div className="absolute top-[360px] left-[1259px] h-[41px] w-[107px] border-[3px] border-[#fb3a3a]" />
    <svg className="absolute top-[400px] left-[1222px]" width="40" height="56" viewBox="0 0 40 56">
      <path d="M38 1L22 9.500L25.500 13L1 55L31.500 16.500L36.500 19Z" fill="#fb3a3a" />
    </svg>
    <div className="absolute top-[245px] left-[1910px] flex h-[59px] w-[10px] flex-col gap-px rounded-l-[3px] border border-[#3a3e48] bg-[#505664] pt-[6px] pl-[3px]">
      {Array.from({ length: 8 }, (_, i) => (
        <i key={`d${i}`} className="h-[2px] w-[4px] shrink-0 bg-[#2a2d36]" />
      ))}
      {Array.from({ length: 3 }, (_, i) => (
        <i key={`y${i}`} className="h-[2px] w-[4px] shrink-0 bg-[#c3d35a]" />
      ))}
      {Array.from({ length: 3 }, (_, i) => (
        <i key={`g${i}`} className="h-[2px] w-[4px] shrink-0 bg-[#6fcf6c]" />
      ))}
      {Array.from({ length: 2 }, (_, i) => (
        <i key={`c${i}`} className="h-[2px] w-[4px] shrink-0 bg-[#52d8c4]" />
      ))}
    </div>
  </>
);

const tabs = ["地图操作", "管网视图", "查询统计", "数据维护", "地图输出", "系统配置"];

export default function App() {
  return (
    <div
      lang="zh-CN"
      className="relative flex h-[1048px] w-[1920px] flex-col overflow-hidden bg-[#bfdbff] font-['Noto_Sans_CJK_SC',sans-serif] text-[12px] leading-4"
    >
      {/* title bar */}
      <div className="flex h-[28px] shrink-0 items-center bg-white">
        <svg className="ml-[46px]" width="7" height="6" viewBox="0 0 7 6">
          <path d="M1 .5H6" stroke="#000080" />
          <path d="M.5 2.500H6.500L3.500 5.500Z" fill="#000080" />
        </svg>
        <span className="mx-auto pb-[5px] pl-[14px] text-[12px] text-[#111]">供水管网基础数据管理平台V2018 - 管理员</span>
        <svg width="110" height="14" viewBox="0 0 110 14" fill="none" className="-mt-[2px] mr-[15px]">
          <path d="M4 7.500H14" stroke="#999" />
          <path d="M50.500 4.500H57.500V12.500H50.500ZM52.500 4V2.500H59.500V10.500H58" stroke="#888" />
          <path d="M95 2L105 12M105 2L95 12" stroke="#888" />
        </svg>
      </div>

      {/* tab strip */}
      <div className="flex h-[31px] shrink-0 items-end bg-[#bfdbff] pl-[41px]">
        {tabs.map((t) =>
          t === "数据维护" ? (
            <div
              key={t}
              className="mr-[2px] ml-[4px] h-[28px] w-[76px] rounded-t-[4px] border border-b-0 border-[#8db2e3] bg-[linear-gradient(180deg,#f0f6fd,#e0eaf6)] pr-[3px] text-center leading-[25px] text-[#15428b]"
            >
              {t}
            </div>
          ) : (
            <div key={t} className="h-[28px] w-[82px] pr-[3px] text-center leading-[26px] text-[#15428b]">
              {t}
            </div>
          ),
        )}
      </div>

      <Ribbon />

      {/* working area */}
      <div className="flex h-[854px] shrink-0 border-t-2 border-[#8fb4dc] bg-[#d5e4f7]">
        <LeftPanel />
        <div className="w-[6px] shrink-0 border-l border-white" />
        <DocArea />
        <div className="w-[6px] shrink-0" />
        <RightPanel />
      </div>

      {/* status bar */}
      <div className="flex h-[23px] shrink-0 border-t border-[#4b78b8] bg-[linear-gradient(180deg,#cfe2fb_0%,#bfd8f9_30%,#aaccf5_34%,#bcd6f8_100%)] text-[#15294f]">
        <span className="w-[132px] pl-[8px] leading-[26px]">当前操作：数据更新</span>
        <span className="w-[113px] pl-[8px] leading-[26px] tracking-[0.500px] whitespace-nowrap">当前坐标 (X,Y)：</span>
        <div className="w-[101px] border-r border-l border-[#888] bg-white pl-[2px] font-['Liberation_Mono',monospace] text-[12px] leading-[21px] tracking-[-0.2px] text-black">498597.463</div>
        <div className="ml-px w-[102px] border-r border-l border-[#888] bg-white pl-[2px] font-['Liberation_Mono',monospace] text-[12px] leading-[21px] tracking-[-0.2px] text-black">3509663.515</div>
        <div className="flex w-[249px] items-center gap-[9px] border-r border-[#8fb0dc] bg-[#c6dbf6] pt-[3px] pl-px">{statusTools}</div>
        <div className="grow" />
        <div className="w-[151px] border-l-2 border-[#5c85c4] bg-[linear-gradient(180deg,#a9c8f2_0%,#97baec_30%,#80a8e2_34%,#8ab0e6_100%)] pl-[18px] text-[13px] leading-[25px] tracking-[-0.35px] whitespace-nowrap">
          当前比例尺 1:53660
        </div>
        <div className="flex w-[119px] items-center justify-end border-x border-t border-[#abc7ec] bg-[#eaf2fc] pt-[3px] pr-[5px]">
          <svg width="6" height="4" viewBox="0 0 6 4">
            <path d="M0 0H6L3 3.500Z" fill="#000060" />
          </svg>
        </div>
        <div className="w-[21px] bg-[linear-gradient(180deg,#a9c8f2_0%,#97baec_30%,#80a8e2_34%,#8ab0e6_100%)]" />
      </div>

      {/* system taskbar edge */}
      <div className="flex h-[8px] shrink-0 overflow-hidden bg-[#31363c]">
        <div className="ml-[48px] w-[344px] bg-[#f2f2f2]" />
        <div className="ml-[295px] w-[48px] bg-[#5b5f64]" />
        <div className="ml-[1080px] w-[100px] pt-[4px] leading-3 text-white">16:18</div>
      </div>

      {/* application button */}
      <svg className="absolute top-[1px] left-px" width="38" height="38" viewBox="0 0 38 38" fill="none">
        <circle cx="19" cy="19" r="17.500" fill="#e4eaf2" stroke="#98a5b8" strokeWidth="1.500" />
        <circle cx="19" cy="19" r="15" stroke="#fff" strokeWidth="2" />
        <circle cx="19" cy="19.500" r="12" fill="#2470ac" />
        <path d="M8 15Q18 4 29 14M13 29Q10 15 22 8M22 31Q30 20 20 9M9 22Q18 28 30 22" stroke="#0b2740" strokeWidth="1.600" />
        <path d="M11 13Q15 8 20 9Q15 12 12 18Z" fill="#b4dcf5" />
        <path d="M22 10Q26 11 28 15Q26 15 24 14Z" fill="#b4dcf5" />
        <path d="M16 20Q21 17 25 21Q21 25 16 23Z" fill="#3b9adc" />
      </svg>

      <Dialog />
      <Notes />
    </div>
  );
}
